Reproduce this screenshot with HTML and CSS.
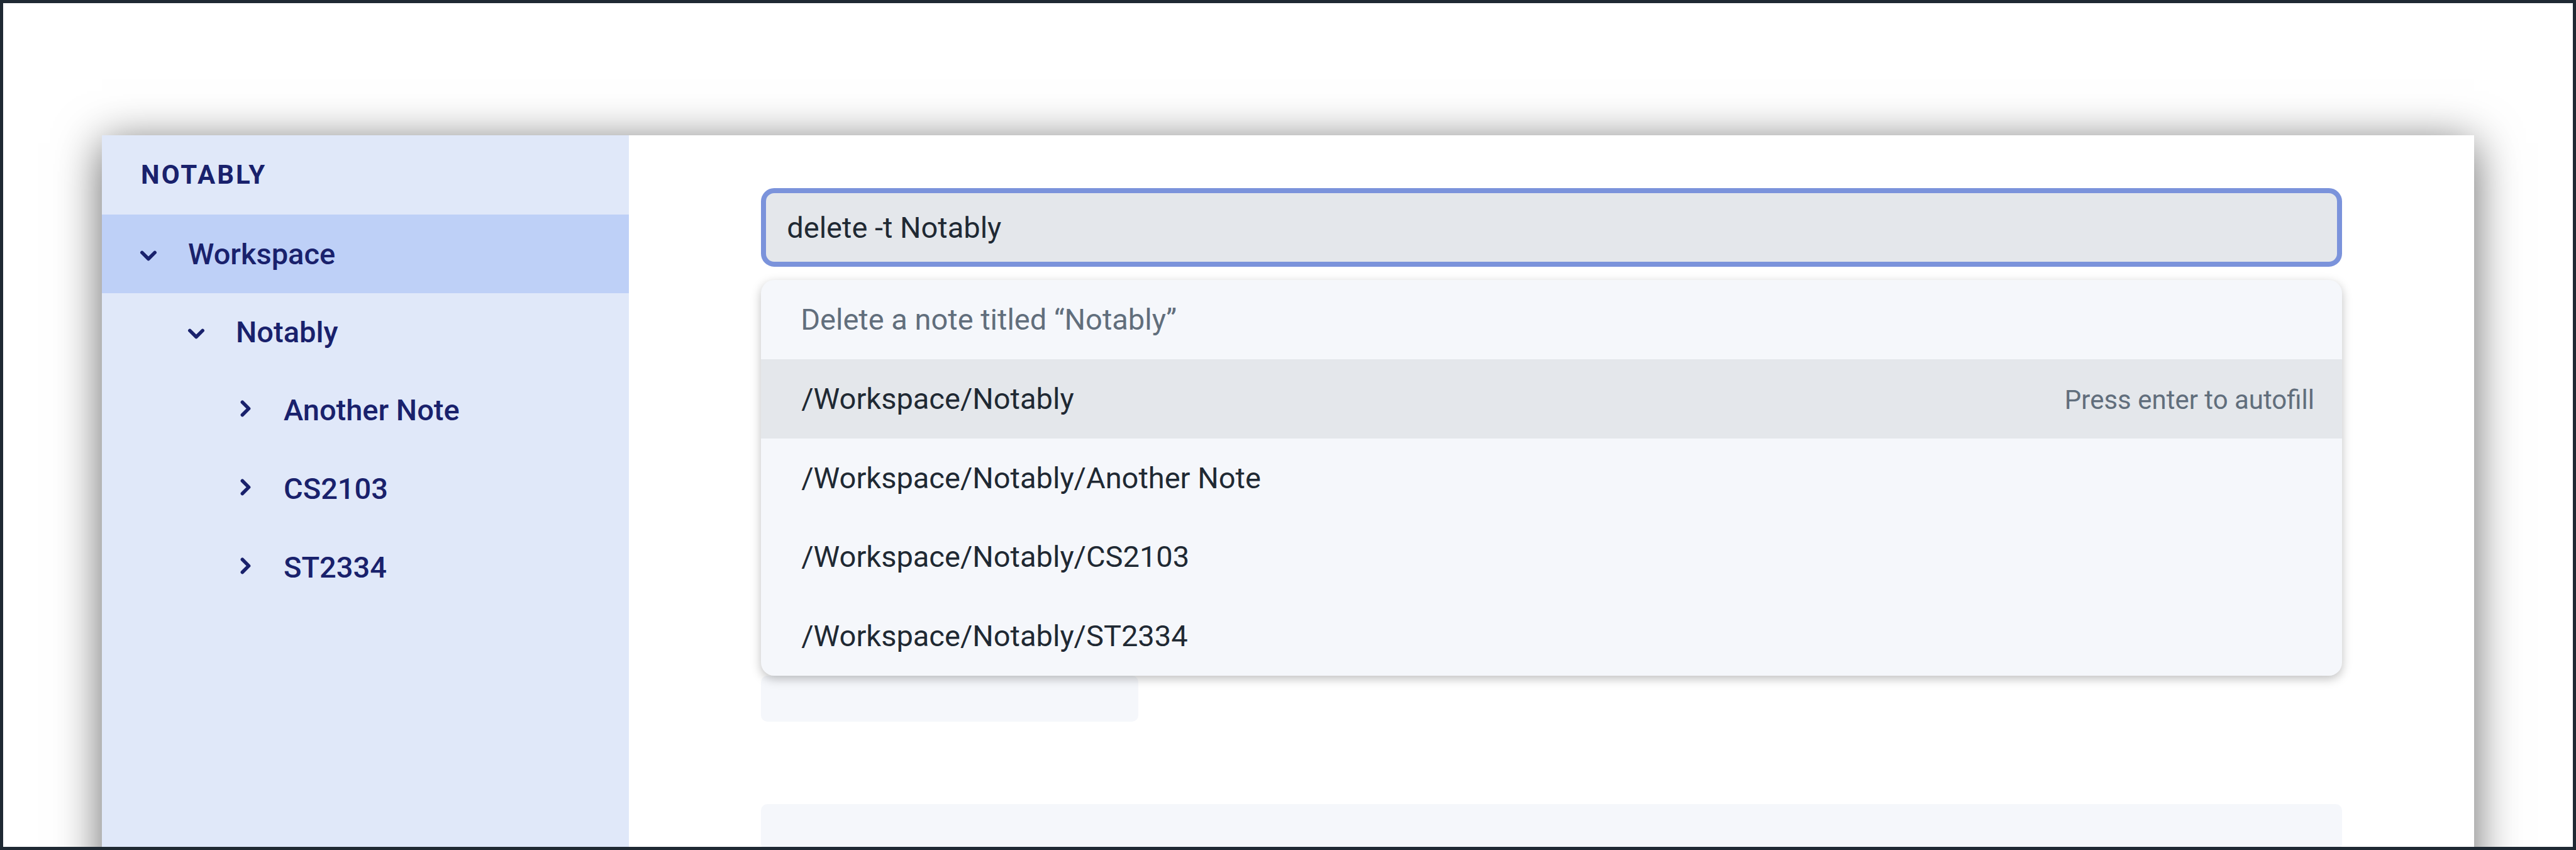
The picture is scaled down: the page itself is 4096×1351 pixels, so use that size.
FILE: index.html
```html
<!DOCTYPE html>
<html lang="en">
<head>
  <meta charset="utf-8">
  <meta name="viewport" content="width=device-width, initial-scale=1">
  <title>Notably</title>
  <link rel="stylesheet" href="styles.css">
</head>
<body>
  <svg class="sprite" aria-hidden="true">
    <symbol id="chevron-down" viewBox="0 0 64 64">
      <path d="M16.5 28 L32 43.5 L47.5 28" fill="none" stroke="currentColor" stroke-width="8.5" stroke-linecap="round" stroke-linejoin="round"/>
    </symbol>
    <symbol id="chevron-right" viewBox="0 0 64 64">
      <path d="M28 12.5 L43.5 28 L28 43.5" fill="none" stroke="currentColor" stroke-width="8.5" stroke-linecap="round" stroke-linejoin="round"/>
    </symbol>
  </svg>

  <div class="window">
    <aside class="sidebar">
      <h1 class="brand">NOTABLY</h1>
      <nav aria-label="Notes">
        <ul class="tree">
          <li>
            <button class="node node-current" type="button" aria-expanded="true"><svg class="chevron"><use href="#chevron-down"/></svg>Workspace</button>
            <ul class="tree">
              <li>
                <button class="node node-compact level-2" type="button" aria-expanded="true"><svg class="chevron"><use href="#chevron-down"/></svg>Notably</button>
                <ul class="tree">
                  <li><button class="node level-3" type="button" aria-expanded="false"><svg class="chevron"><use href="#chevron-right"/></svg>Another Note</button></li>
                  <li><button class="node level-3" type="button" aria-expanded="false"><svg class="chevron"><use href="#chevron-right"/></svg>CS2103</button></li>
                  <li><button class="node level-3" type="button" aria-expanded="false"><svg class="chevron"><use href="#chevron-right"/></svg>ST2334</button></li>
                </ul>
              </li>
            </ul>
          </li>
        </ul>
      </nav>
    </aside>

    <main class="editor">
      <div class="command">
        <input class="command-input" type="text" aria-label="Command" value="delete -t Notably">
        <div class="suggestions">
          <p class="hint">Delete a note titled “Notably”</p>
          <button class="suggestion suggestion-active" type="button">/Workspace/Notably<span class="autofill">Press enter to autofill</span></button>
          <button class="suggestion" type="button">/Workspace/Notably/Another Note</button>
          <button class="suggestion" type="button">/Workspace/Notably/CS2103</button>
          <button class="suggestion" type="button">/Workspace/Notably/ST2334</button>
        </div>
      </div>
      <div class="skeleton">
        <div class="block block-title"></div>
        <div class="block"></div>
      </div>
    </main>
  </div>
</body>
</html>
```

FILE: styles.css
```css
:root {
  --ink: #1f2933;
  --muted: #616e7c;
  --navy: #19216c;
  --surface: #f5f7fb;
  --active: #e4e7eb;
  --row: 125px;
}

* {
  box-sizing: border-box;
}

body {
  margin: 0;
  height: 100vh;
  padding: 210px 157px 0;
  border: 5px solid var(--ink);
  overflow: hidden;
  background: #fff;
  color: var(--ink);
  font-family: Roboto, "Liberation Sans", sans-serif;
  font-size: 47px;
}

button,
input {
  font: inherit;
  color: inherit;
}

.sprite {
  display: none;
}

.window {
  display: grid;
  grid-template-columns: 2fr 7fr;
  height: 100vh;
  background: #fff;
  box-shadow: 0 12px 68px rgba(0, 0, 0, 0.6);
}

.sidebar {
  background: #e0e8f9;
  color: var(--navy);
}

.brand {
  margin: 0;
  padding-left: 62px;
  font-size: 42px;
  font-weight: 700;
  letter-spacing: 3px;
  line-height: 126px;
}

.tree {
  margin: 0;
  padding: 0;
  list-style: none;
}

.node {
  display: flex;
  align-items: center;
  gap: 42px;
  width: 100%;
  height: var(--row);
  padding: 0 0 0 53px;
  border: 0;
  background: none;
  font-weight: 500;
  text-align: left;
}

.node-current {
  background: #bed0f7;
}

.node-compact {
  height: 123px;
}

.level-2 {
  padding-left: 129px;
}

.level-3 {
  padding-left: 205px;
}

.chevron {
  width: 42px;
  height: 42px;
}

.editor {
  padding: 84px 210px 0;
}

.command {
  position: relative;
}

.command-input {
  display: block;
  width: 100%;
  height: var(--row);
  padding: 0 33px;
  border: 8px solid #7b93db;
  border-radius: 21px;
  background: var(--active);
  outline: none;
}

.suggestions {
  position: absolute;
  top: 100%;
  left: 0;
  right: 0;
  display: grid;
  grid-auto-rows: 1fr;
  height: 629px;
  margin-top: 21px;
  border-radius: 21px;
  overflow: hidden;
  background: var(--surface);
  box-shadow: 0 5px 16px rgba(0, 0, 0, 0.25);
}

.hint {
  margin: 0;
  padding: 0 63px;
  color: var(--muted);
  line-height: var(--row);
}

.suggestion {
  display: flex;
  align-items: baseline;
  justify-content: space-between;
  width: 100%;
  padding: 0 44px 0 64px;
  border: 0;
  background: none;
  line-height: var(--row);
  text-align: left;
}

.suggestion-active {
  background: var(--active);
}

.autofill {
  color: var(--muted);
  font-size: 42px;
  line-height: 1;
}

.skeleton {
  display: flex;
  flex-direction: column;
  gap: 131px;
  padding-top: 650px;
}

.block {
  height: 73px;
  border-radius: 10px;
  background: var(--surface);
}

.block-title {
  width: 600px;
}
```
